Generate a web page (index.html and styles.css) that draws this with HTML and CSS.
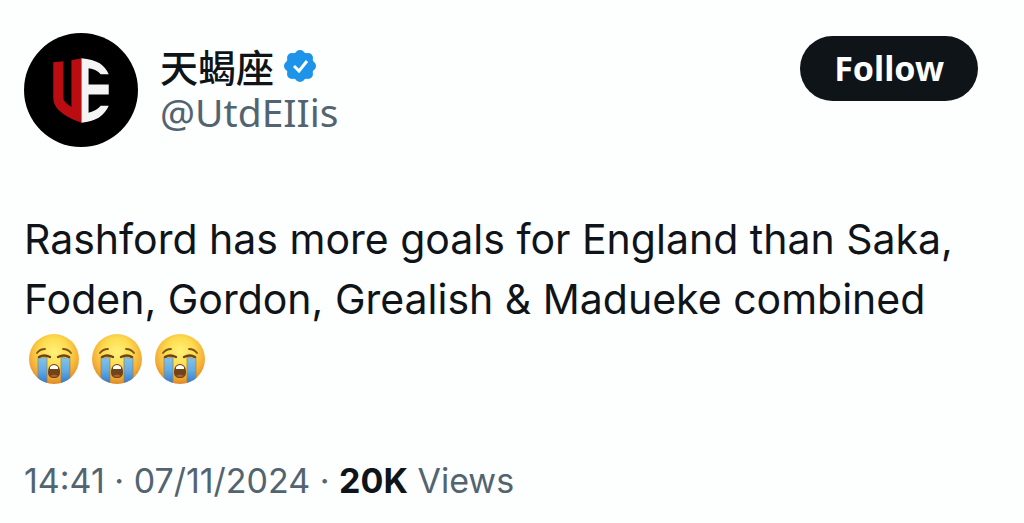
FILE: index.html
```
<!DOCTYPE html>
<html lang="en">
  <head>
    <meta charset="utf-8">
    <title>Post</title>
    <link rel="stylesheet" href="styles.css">
  </head>
  <body>
    <!-- Shared drawings -->
    <svg class="defs" width="0" height="0" aria-hidden="true">
      <defs>
        <radialGradient id="skin" cx="50%" cy="36%" r="64%">
          <stop offset="0" stop-color="#fff27a"/>
          <stop offset="0.45" stop-color="#fddb4e"/>
          <stop offset="0.8" stop-color="#f3ab35"/>
          <stop offset="1" stop-color="#dd8a25"/>
        </radialGradient>
        <linearGradient id="tear" x1="0" y1="0" x2="0" y2="1">
          <stop offset="0" stop-color="#84c4ea"/>
          <stop offset="0.5" stop-color="#62abe4"/>
          <stop offset="1" stop-color="#2f78cc"/>
        </linearGradient>
        <clipPath id="face"><circle cx="25" cy="25" r="25"/></clipPath>
        <symbol id="sob" viewBox="0 0 50 50">
          <circle cx="25" cy="25" r="25" fill="url(#skin)"/>
          <g clip-path="url(#face)">
            <path d="M9 23q4 2 9 0v27H9z" fill="url(#tear)" stroke="#a57f3c" stroke-width="0.7"/>
            <path d="M32 23q5 2 9 0v27h-9z" fill="url(#tear)" stroke="#a57f3c" stroke-width="0.7"/>
          </g>
          <path d="M8 19q3-4 8-4M42 19q-3-4-8-4" fill="none" stroke="#7b501b" stroke-width="1.8" stroke-linecap="round"/>
          <path d="M10 23q5-3 11 0M29 23q6-3 11 0" fill="none" stroke="#6b4315" stroke-width="2.4" stroke-linecap="round"/>
          <path d="M25 30c4 0 6 4 6 8 0 4-2 6-6 6s-6-2-6-6c0-4 2-8 6-8z" fill="#70431a"/>
          <path d="M21 33q4-4 8 0v2h-8z" fill="#fff"/>
          <path d="M21 42q4-3 8 0-4 2-8 0z" fill="#a9672c"/>
        </symbol>
      </defs>
    </svg>

    <article class="post">
      <header class="post-header">
        <svg class="avatar" viewBox="0 0 113 113" role="img" aria-label="Profile picture">
          <circle cx="56.5" cy="56.5" r="56.5" fill="#000"/>
          <path d="M29 29l10-1v36q0 5 8 9V27l10-2v64q-15-5-23-13-5-5-5-12z" fill="#b90d12"/>
          <path d="M57 25q11 1 18 5 6 4 9 11h-8q-4-5-12-6v16h20v10H64v18q8-2 12-7h8q-3 7-10 12-7 4-17 5z" fill="#f4f4f4"/>
        </svg>
        <div class="author">
          <div class="name-row">
            <span class="name" lang="zh">天蝎座</span>
            <svg class="badge" viewBox="0 0 34 34" role="img" aria-label="Verified">
              <g fill="#1d94ea">
                <circle cx="17" cy="17" r="14"/>
                <circle cx="17" cy="6" r="5"/><circle cx="25" cy="9" r="5"/>
                <circle cx="28" cy="17" r="5"/><circle cx="25" cy="25" r="5"/>
                <circle cx="17" cy="28" r="5"/><circle cx="9" cy="25" r="5"/>
                <circle cx="6" cy="17" r="5"/><circle cx="9" cy="9" r="5"/>
              </g>
              <path d="M11 17l5 5 8-10" fill="none" stroke="#fff" stroke-width="3"/>
            </svg>
          </div>
          <a class="handle" href="#">@UtdEIIis</a>
        </div>
        <button class="follow-btn" type="button">Follow</button>
      </header>

      <p class="post-text">Rashford has more goals for England than Saka, Foden, Gordon, Grealish &amp; Madueke combined</p>
      <div class="emojis">
        <svg class="emoji" role="img" aria-label="Loudly crying face"><use href="#sob"/></svg>
        <svg class="emoji" role="img" aria-label="Loudly crying face"><use href="#sob"/></svg>
        <svg class="emoji" role="img" aria-label="Loudly crying face"><use href="#sob"/></svg>
      </div>

      <footer class="post-meta">14:41 · 07/11/2024 · <strong>20K</strong> Views</footer>
    </article>
  </body>
</html>
```
FILE: styles.css
```
body {
  margin: 0;
  background-color: #fdfefe;
  color: #0f1419;
  font-family: Inter, "Noto Sans CJK SC", sans-serif;
}
.defs {
  display: block;
}
.post {
  padding: 33px 46px 0 24px;
}
.post-header {
  display: flex;
  align-items: flex-start;
}
.avatar {
  width: 114px;
  height: 114px;
  flex: none;
}
.author {
  flex: 1;
  margin: 10px 0 0 22px;
}
.name-row {
  display: flex;
  align-items: center;
  gap: 9px;
  height: 46px;
}
.name {
  font-family: "Noto Sans CJK SC", sans-serif;
  font-size: 38px;
  font-weight: 500;
  line-height: 46px;
}
.badge {
  width: 34px;
  height: 34px;
}
.handle {
  display: block;
  color: #536471;
  font-family: "Noto Sans", sans-serif;
  font-size: 39px;
  line-height: 46px;
  text-decoration: none;
}
.follow-btn {
  margin-top: 3px;
  padding: 0 34px 2px;
  height: 65px;
  border: none;
  border-radius: 33px;
  background-color: #0f1419;
  color: #fff;
  font-family: "Noto Sans", sans-serif;
  font-size: 34px;
  font-weight: 700;
  cursor: pointer;
}
.post-text {
  margin: 62px 0 0;
  font-size: 41px;
  line-height: 60px;
}
.emojis {
  display: flex;
  gap: 13px;
  padding: 5px;
}
.emoji {
  width: 50px;
  height: 50px;
}
.post-meta {
  margin-top: 70px;
  color: #536471;
  font-size: 34px;
  line-height: 44px;
}
.post-meta strong {
  color: #0f1419;
}
```
